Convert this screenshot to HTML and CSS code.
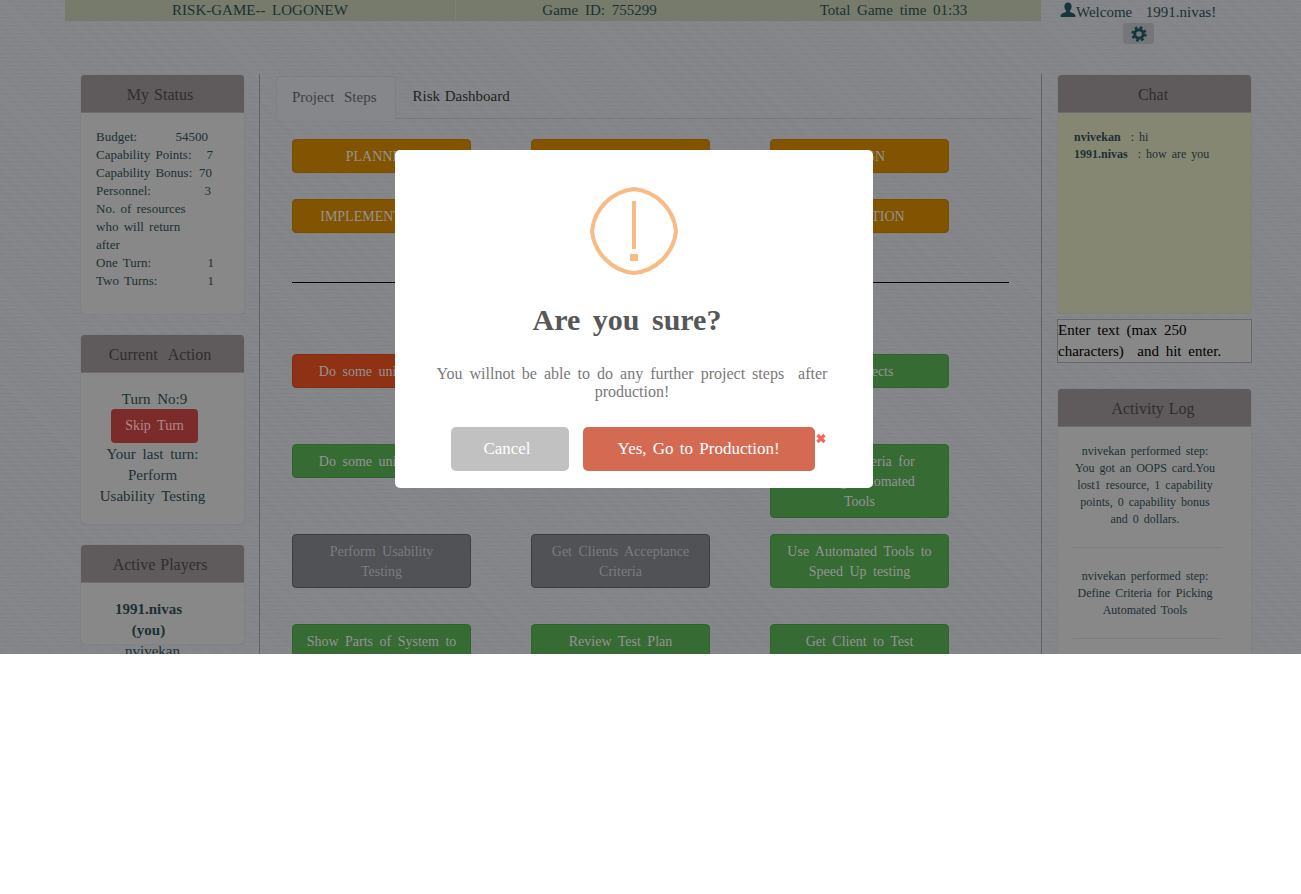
FILE: index.html
```html
<!DOCTYPE html>
<html lang="en">
<head>
    <meta charset="UTF-8">
    <title>Risk Game</title>
    <link rel="stylesheet" href="styles.css">
</head>
<body>
    <div class="page">
        <div class="header">
            <div class="topbar">
                <div class="topbar-cell">RISK-GAME-- LOGONEW</div>
                <div class="topbar-cell topbar-game">Game ID: 755299</div>
                <div class="topbar-cell topbar-time">Total Game time 01:33</div>
            </div>
            <div class="user-box">
                <div class="welcome">
                    <svg class="user-icon" width="16" height="16" viewBox="0 0 16 16"><path d="M8 0.5c2.4 0 3.6 1.8 3.6 4 0 1.7-0.7 3.2-1.6 4v1.6c1.9 0.8 4.9 1.6 5.4 3.2V15H0.6v-1.7c0.5-1.6 3.5-2.4 5.4-3.2V8.5C5.100 7.700 4.400 6.200 4.400 4.500c0-2.200 1.200-4 3.600-4z"/></svg>Welcome &nbsp;1991.nivas!
                </div>
                <div class="gear-button">
                    <svg width="16" height="16" viewBox="0 0 16 16"><circle cx="8" cy="8" r="4.300" fill="none" stroke="#16353d" stroke-width="3"/><circle cx="8" cy="8" r="6.500" fill="none" stroke="#16353d" stroke-width="2.400" stroke-dasharray="2.600 2.500"/></svg>
                </div>
            </div>
        </div>

        <div class="layout">
            <div class="left-col">
                <div class="panel panel-status">
                    <div class="panel-title">My Status</div>
                    <div class="status-body">
                        <div class="status-row"><span>Budget:</span><span class="pad-6">54500</span></div>
                        <div class="status-row"><span>Capability Points:</span><span class="pad-1">7</span></div>
                        <div class="status-row"><span>Capability Bonus:</span><span class="pad-2">70</span></div>
                        <div class="status-row"><span>Personnel:</span><span class="pad-3">3</span></div>
                        <div class="status-note">No. of resources who will return after</div>
                        <div class="status-row"><span>One Turn:</span><span>1</span></div>
                        <div class="status-row"><span>Two Turns:</span><span>1</span></div>
                    </div>
                </div>
                <div class="panel panel-action">
                    <div class="panel-title">Current &nbsp;Action</div>
                    <div class="action-body">
                        <div>Turn No:9</div>
                        <div class="skip-button">Skip Turn</div>
                        <div class="last-turn">Your last turn:<br>Perform<br>Usability Testing</div>
                    </div>
                </div>
                <div class="panel panel-players">
                    <div class="panel-title">Active Players</div>
                    <div class="players-body">
                        <div class="player-me">1991.nivas<br>(you)</div>
                        <div class="player">nvivekan</div>
                    </div>
                </div>
            </div>

            <div class="center-col">
                <div class="tabs">
                    <div class="tab tab-active">Project &nbsp;Steps</div>
                    <div class="tab">Risk Dashboard</div>
                </div>
                <div class="phase-grid">
                    <div class="btn btn-orange">PLANNING</div>
                    <div class="btn btn-orange">ANALYSIS</div>
                    <div class="btn btn-orange">DESIGN</div>
                    <div class="btn btn-orange">IMPLEMENTATION</div>
                    <div class="btn btn-orange">TESTING</div>
                    <div class="btn btn-orange">PRODUCTION</div>
                </div>
                <hr class="divider">
                <div class="step-grid">
                    <div class="btn btn-red">Do some unit testing</div>
                    <div class="btn btn-green">Review Design</div>
                    <div class="btn btn-green">Fix Defects</div>
                    <div class="btn btn-green">Do some unit testing</div>
                    <div class="btn btn-green">Test Plan</div>
                    <div class="btn btn-green">Define Criteria for<br>Picking Automated<br>Tools</div>
                    <div class="btn btn-grey">Perform Usability<br>Testing</div>
                    <div class="btn btn-grey">Get Clients Acceptance Criteria</div>
                    <div class="btn btn-green">Use Automated Tools to Speed Up testing</div>
                    <div class="btn btn-green">Show Parts of System to Users</div>
                    <div class="btn btn-green">Review Test Plan</div>
                    <div class="btn btn-green">Get Client to Test</div>
                </div>
            </div>

            <div class="right-col">
                <div class="panel panel-chat">
                    <div class="panel-title">Chat</div>
                    <div class="chat-body">
                        <div class="chat-line"><b>nvivekan</b>&nbsp; : hi</div>
                        <div class="chat-line"><b>1991.nivas</b>&nbsp; : how are you</div>
                    </div>
                </div>
                <div class="chat-input">Enter text (max 250 characters) &nbsp;and hit enter.</div>
                <div class="panel panel-log">
                    <div class="panel-title">Activity Log</div>
                    <div class="log-body">
                        <div class="log-item">nvivekan performed step: You got an OOPS card.You lost1 resource, 1 capability points, 0 capability bonus and 0 dollars.</div>
                        <div class="log-item">nvivekan performed step: Define Criteria for Picking Automated Tools</div>
                    </div>
                </div>
            </div>
        </div>

        <div class="modal">
            <svg class="modal-icon" width="88" height="88" viewBox="0 0 88 88">
                <path d="M44 2A47 47 0 0 1 86 44A47 47 0 0 1 44 86A47 47 0 0 1 2 44A47 47 0 0 1 44 2Z" fill="none" stroke="#f8bb86" stroke-width="4"/>
                <rect x="42" y="14" width="4" height="48" fill="#f8bb86"/>
                <rect x="40" y="67" width="8" height="7" fill="#f8bb86"/>
            </svg>
            <h2 class="modal-title">Are you sure?</h2>
            <p class="modal-text">You willnot be able to do any further project steps &nbsp;after production!</p>
            <div class="modal-actions">
                <div class="modal-btn modal-cancel">Cancel</div>
                <div class="modal-btn modal-confirm">Yes, Go to Production!</div>
                <svg class="modal-close" width="10" height="11" viewBox="0 0 10 11"><path d="M1.500 2L8.500 9M8.500 2L1.500 9" stroke="#f0695a" stroke-width="3.400"/></svg>
            </div>
        </div>
    </div>
</body>
</html>
```

FILE: styles.css
```css
/* the page sits dimmed behind the dialog, so colours here are the dimmed ones */
body {
    margin: 0;
    background-color: #fff;
    font-family: "Liberation Serif", serif;
    word-spacing: 3px;
    color: #1c3034;
}

.page {
    position: relative;
    height: 654px;
    overflow: hidden;
    background-color: #86888b;
    background-image:
        repeating-linear-gradient(45deg, rgba(0, 0, 0, 0.03) 0 1px, transparent 1px 2px),
        repeating-linear-gradient(0deg, rgba(0, 0, 0, 0.02) 0 1px, transparent 1px 4px);
}

/* header */
.header {
    display: flex;
    height: 74px;
    padding-left: 65px;
}

.topbar {
    display: grid;
    grid-template-columns: 390px 288px 298px;
    width: 976px;
    height: 21px;
    background-color: #767b6b;
    font-size: 15px;
    line-height: 21px;
    text-align: center;
}

.topbar-game {
    border-left: 1px solid #7d8275;
}

.topbar-time {
    padding-left: 3px;
}

.user-box {
    width: 194px;
    padding-left: 19px;
    text-align: center;
    font-size: 15px;
}

.welcome {
    display: flex;
    align-items: flex-start;
    height: 23px;
    line-height: 24px;
    white-space: pre-wrap;
}

.user-icon {
    margin-top: 2px;
    fill: #16353d;
}

.gear-button {
    display: flex;
    align-items: center;
    justify-content: center;
    width: 31px;
    height: 21px;
    margin-left: 63px;
    background-color: #747679;
    border-radius: 3px;
}

/* columns */
.layout {
    display: flex;
    padding-left: 81px;
}

.left-col {
    width: 163px;
    padding-top: 1px;
    margin-right: 15px;
}

.center-col {
    width: 783px;
    height: 580px;
    border-left: 1px solid #5f6166;
    border-right: 1px solid #5f6166;
    box-sizing: border-box;
    padding-top: 2px;
}

.right-col {
    width: 194px;
    padding-top: 1px;
    margin-left: 16px;
}

/* panels */
.panel {
    background-color: #888888;
    border-radius: 4px;
    box-shadow: 0 0 1px rgba(0, 0, 0, 0.3);
}

.panel-title {
    height: 37px;
    padding-right: 3px;
    background-color: #5f5a5c;
    border-bottom: 1px solid #6f6c6e;
    border-radius: 4px 4px 0 0;
    color: #2e2e2e;
    font-size: 16px;
    line-height: 39px;
    text-align: center;
    word-spacing: 1px;
}

.left-col .panel-title {
    padding-right: 5px;
}

.panel-status {
    height: 239px;
    margin-bottom: 21px;
}

.panel-action {
    height: 189px;
    margin-bottom: 21px;
}

.panel-players {
    height: 99px;
}

.status-body {
    padding: 15px 30px 0 15px;
    font-size: 13px;
    line-height: 18px;
    word-spacing: 2px;
}

.status-row {
    display: flex;
    justify-content: space-between;
    white-space: nowrap;
}

.status-note {
    width: 100px;
}

.pad-6 {
    padding-right: 6px;
}

.pad-1 {
    padding-right: 1px;
}

.pad-2 {
    padding-right: 2px;
}

.pad-3 {
    padding-right: 3px;
}

.action-body {
    padding: 16px 16px 0 0;
    font-size: 15px;
    line-height: 21px;
    text-align: center;
}

.skip-button {
    width: 87px;
    height: 34px;
    margin: -1px auto 0;
    background-color: #7c2b2b;
    border-radius: 4px;
    box-sizing: border-box;
    color: #b08888;
    font-size: 14px;
    line-height: 34px;
}

.last-turn {
    margin-top: 1px;
    padding-right: 4px;
    white-space: nowrap;
}

.players-body {
    padding: 16px 20px 0 0;
    font-size: 15px;
    line-height: 21px;
    text-align: center;
}

.player-me {
    font-weight: bold;
    padding-right: 8px;
}

.chat-body {
    height: 184px;
    padding: 16px 16px 0;
    background-color: #868773;
    border-radius: 0 0 4px 4px;
    font-size: 12px;
    line-height: 17px;
    word-spacing: 2px;
}

.panel-chat {
    height: 238px;
    width: 193px;
}

.chat-input {
    width: 193px;
    height: 42px;
    margin: 6px 0 26px -1px;
    border: 1px solid #66676a;
    background-color: #888888;
    color: #000;
    font-size: 15px;
    line-height: 21px;
}

.panel-log {
    width: 193px;
    height: 300px;
}

.log-body {
    padding: 16px 30px 0 15px;
    font-size: 12px;
    line-height: 17px;
    text-align: center;
    word-spacing: 2px;
}

.log-item {
    padding: 0 6px 19px 2px;
    margin-bottom: 20px;
    border-bottom: 1px solid #7d7d7d;
}

/* center tabs and buttons */
.tabs {
    display: flex;
    height: 42px;
    margin: 0 10px 0 16px;
    border-bottom: 1px solid #77797d;
    font-size: 15px;
    line-height: 41px;
    word-spacing: 1px;
}

.tab {
    padding: 0 15px 0 17px;
    color: #222;
}

.tab-active {
    padding: 0 18px 0 15px;
    height: 42px;
    background-color: #85878a;
    border: 1px solid #7d7f82;
    border-bottom: none;
    border-radius: 4px 4px 0 0;
    color: #3c3f42;
    white-space: nowrap;
}

.phase-grid {
    display: grid;
    grid-template-columns: repeat(3, 179px);
    grid-auto-rows: 60px;
    column-gap: 60px;
    align-items: start;
    margin: 20px 0 0 32px;
}

.divider {
    width: 717px;
    height: 1px;
    margin: 23px 0 71px 32px;
    border: none;
    background-color: #000;
}

.step-grid {
    display: grid;
    grid-template-columns: repeat(3, 179px);
    grid-auto-rows: 90px;
    column-gap: 60px;
    align-items: start;
    margin-left: 32px;
}

.btn {
    padding: 7px 12px 5px;
    border: 1px solid transparent;
    border-radius: 4px;
    color: #949494;
    font-size: 14px;
    line-height: 20px;
    text-align: center;
}

.btn-orange {
    background-color: #825300;
    border-color: #7a4e00;
}

.btn-red {
    background-color: #8f3114;
    border-color: #842d12;
}

.btn-green {
    background-color: #376b34;
    border-color: #316330;
}

.btn-grey {
    background-color: #505256;
    border-color: #3c3e41;
    color: #7a7c7f;
}

/* confirm dialog */
.modal {
    position: absolute;
    top: 150px;
    left: 395px;
    width: 478px;
    height: 338px;
    box-sizing: border-box;
    padding: 37px 17px 17px;
    background-color: #fff;
    border-radius: 5px;
    text-align: center;
}

.modal-icon {
    display: block;
    margin: 0 auto 25px;
}

.modal-title {
    margin: 0;
    padding-right: 14px;
    color: #575757;
    font-size: 30px;
    font-weight: bold;
    line-height: 40px;
    word-spacing: 5px;
}

.modal-text {
    margin: 25px 0 26px;
    padding: 0 25px 0 21px;
    color: #797979;
    font-size: 16px;
    line-height: 18px;
}

.modal-actions {
    position: relative;
    display: flex;
    justify-content: center;
    gap: 14px;
    padding-right: 2px;
}

.modal-btn {
    height: 44px;
    box-sizing: border-box;
    padding: 0 34px;
    border-radius: 5px;
    color: #fff;
    font-size: 17px;
    line-height: 43px;
    white-space: nowrap;
    word-spacing: 2px;
}

.modal-cancel {
    padding: 0 38px 0 32px;
    background-color: #c1c1c1;
}

.modal-confirm {
    padding: 0 35px;
    background-color: #d46a52;
}

.modal-close {
    position: absolute;
    top: 6px;
    left: 404px;
}
```
